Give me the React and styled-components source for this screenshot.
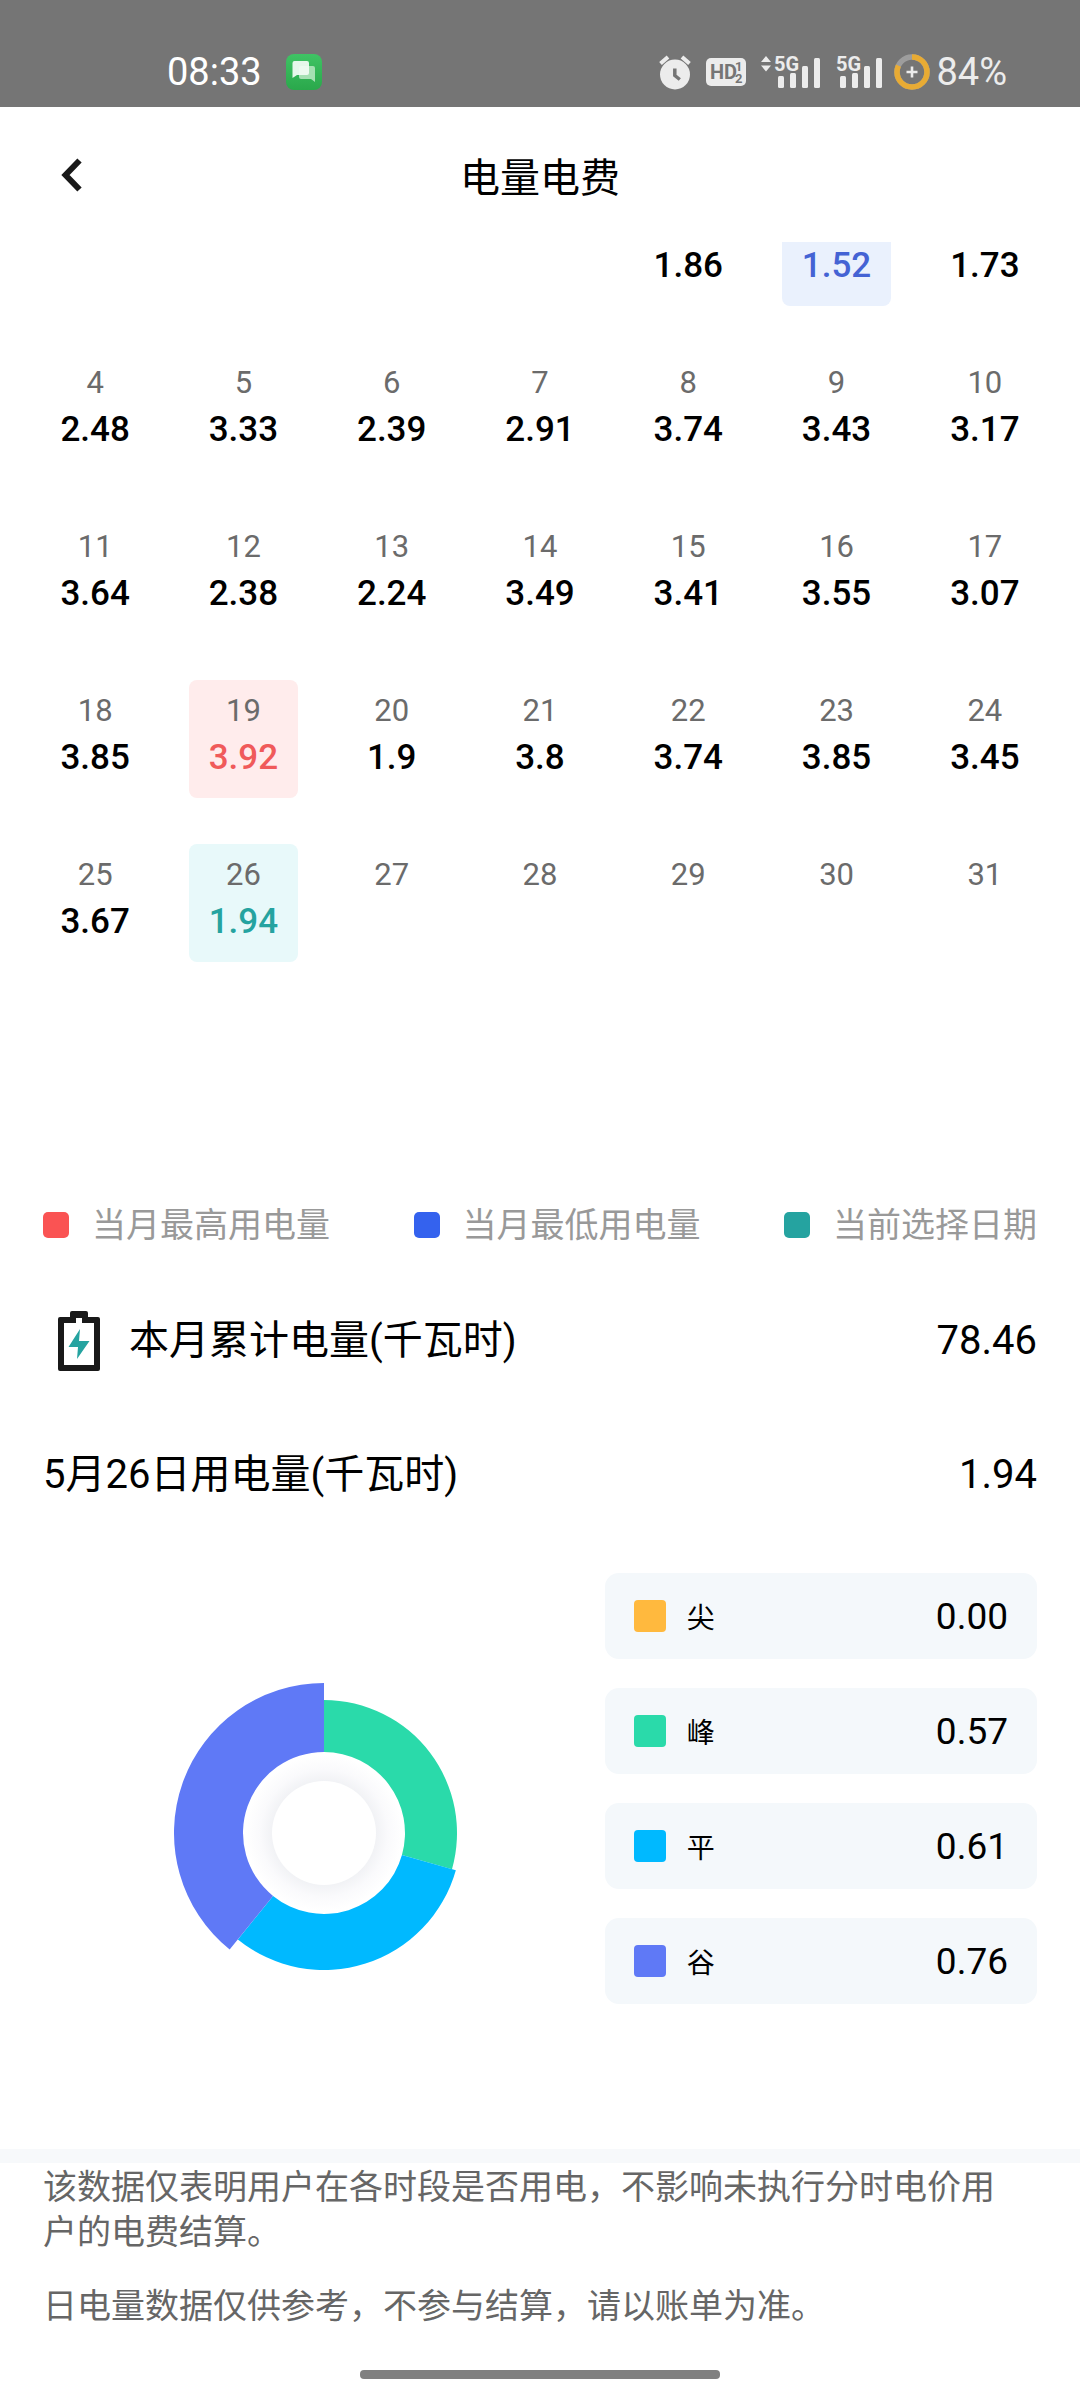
import React from "react";
import styled, { createGlobalStyle } from "styled-components";

const tones = {
  max: { color: "#f05a5a", background: "#ffecec" },
  min: { color: "#4463d4", background: "#eaf1fd" },
  selected: { color: "#25a3a0", background: "#e8f9fa" },
};

const leadingBlanks = 4;

const days = [
  { day: 1, value: "1.86", clipped: true },
  { day: 2, value: "1.52", clipped: true, tone: "min" },
  { day: 3, value: "1.73", clipped: true },
  { day: 4, value: "2.48" },
  { day: 5, value: "3.33" },
  { day: 6, value: "2.39" },
  { day: 7, value: "2.91" },
  { day: 8, value: "3.74" },
  { day: 9, value: "3.43" },
  { day: 10, value: "3.17" },
  { day: 11, value: "3.64" },
  { day: 12, value: "2.38" },
  { day: 13, value: "2.24" },
  { day: 14, value: "3.49" },
  { day: 15, value: "3.41" },
  { day: 16, value: "3.55" },
  { day: 17, value: "3.07" },
  { day: 18, value: "3.85" },
  { day: 19, value: "3.92", tone: "max" },
  { day: 20, value: "1.9" },
  { day: 21, value: "3.8" },
  { day: 22, value: "3.74" },
  { day: 23, value: "3.85" },
  { day: 24, value: "3.45" },
  { day: 25, value: "3.67" },
  { day: 26, value: "1.94", tone: "selected" },
  { day: 27 },
  { day: 28 },
  { day: 29 },
  { day: 30 },
  { day: 31 },
];

const legend = [
  { label: "当月最高用电量", color: "#fa5353" },
  { label: "当月最低用电量", color: "#3462ee" },
  { label: "当前选择日期", color: "#25a3a0" },
];

const periods = [
  { label: "尖", value: "0.00", color: "#ffb93e" },
  { label: "峰", value: "0.57", color: "#2adaaa", radius: 133 },
  { label: "平", value: "0.61", color: "#00b9ff", radius: 137 },
  { label: "谷", value: "0.76", color: "#5f79f6", radius: 150 },
];

const point = (radius, turn) => {
  const angle = turn * 2 * Math.PI;
  return `${150 + radius * Math.sin(angle)} ${150 - radius * Math.cos(angle)}`;
};

const slicePath = (outer, inner, from, to) => {
  const large = to - from > 0.5 ? 1 : 0;
  return `M${point(outer, from)} A${outer} ${outer} 0 ${large} 1 ${point(outer, to)} L${point(inner, to)} A${inner} ${inner} 0 ${large} 0 ${point(inner, from)} Z`;
};

function MessageIcon() {
  return (
    <svg width="36" height="36" viewBox="0 0 36 36" aria-hidden="true">
      <defs>
        <linearGradient id="message" x1="0" y1="0" x2="0" y2="1">
          <stop offset="0" stopColor="#3fc364" />
          <stop offset="1" stopColor="#2aa84b" />
        </linearGradient>
      </defs>
      <rect width="36" height="36" rx="8" fill="url(#message)" />
      <path d="M15 12h12a2 2 0 0 1 2 2v14l-4-3H15a2 2 0 0 1-2-2v-9a2 2 0 0 1 2-2z" fill="#a5e0b3" />
      <path d="M8.500 7H21a2 2 0 0 1 2 2v10a2 2 0 0 1-2 2H11l-4.500 3V9a2 2 0 0 1 2-2z" fill="#f1fbf3" fillOpacity="0.94" />
    </svg>
  );
}

function AlarmIcon() {
  return (
    <svg width="32" height="36" viewBox="0 0 32 36" aria-hidden="true">
      <circle cx="16" cy="20.500" r="15" fill="#ececec" />
      <path d="M1.500 9.500 9 3M23 3l7.500 6.500" stroke="#ececec" strokeWidth="4" />
      <path d="M15.800 14.500v7l5 4" fill="none" stroke="#757575" strokeWidth="3.500" />
    </svg>
  );
}

function HdIcon() {
  return (
    <svg width="40" height="28" viewBox="0 0 40 28" aria-hidden="true">
      <rect width="40" height="28" rx="5" fill="#ececec" />
      <HdText x="4" y="21" $size={20}>HD</HdText>
      <HdText x="29" y="13" $size={13}>1</HdText>
      <HdText x="29" y="25" $size={13}>2</HdText>
    </svg>
  );
}

function SignalIcon({ arrows }) {
  return (
    <svg
      width={arrows ? 60 : 47}
      height="42"
      viewBox={arrows ? "-13 -4 60 42" : "0 -4 47 42"}
      aria-hidden="true"
    >
      <g fill="#ececec">
        {arrows && <path d="M-13 7l5-6 5 6zM-13 10.500l5 6 5-6z" />}
        <rect x="4" y="21" width="6" height="12" rx="1.500" />
        <rect x="16" y="18" width="6" height="15" rx="1.500" />
        <rect x="28" y="11" width="6" height="22" rx="1.500" />
        <rect x="40" y="3" width="6" height="30" rx="1.500" />
      </g>
      <NetText x="0" y="16">5G</NetText>
    </svg>
  );
}

function BatteryRing() {
  return (
    <svg width="36" height="36" viewBox="0 0 36 36" aria-hidden="true">
      <circle cx="18" cy="18" r="15" fill="none" stroke="#9d9d9d" strokeWidth="5.500" />
      <circle
        cx="18"
        cy="18"
        r="15"
        fill="none"
        stroke="#e8ab34"
        strokeWidth="5.500"
        pathLength="100"
        strokeDasharray="82 18"
        transform="rotate(-90 18 18)"
      />
      <path d="M12.500 18h11M18 12.500v11" stroke="#ececec" strokeWidth="2.600" />
    </svg>
  );
}

function BatteryIcon() {
  return (
    <svg width="42" height="60" viewBox="0 0 42 60" aria-hidden="true">
      <path
        fillRule="evenodd"
        fill="#191919"
        d="M14 0h14a2 2 0 0 1 2 2v4h10a2 2 0 0 1 2 2v50a2 2 0 0 1-2 2H2a2 2 0 0 1-2-2V8a2 2 0 0 1 2-2h10V2a2 2 0 0 1 2-2zM6 12v42h30V12H24V7h-6v5z"
      />
      <path fill="#25a3a0" d="M22 18 10.500 36H20l-1 12 12.500-18H21z" />
    </svg>
  );
}

function UsageChart() {
  const total = periods.reduce((sum, period) => sum + Number(period.value), 0);
  let turn = 0;
  const slices = periods
    .filter((period) => Number(period.value) > 0)
    .map((period) => {
      const from = turn;
      turn += Number(period.value) / total;
      return { ...period, d: slicePath(period.radius, 81, from, turn) };
    });

  return (
    <svg width="300" height="300" viewBox="0 0 300 300" role="img" aria-label="分时用电量">
      <defs>
        <radialGradient id="halo">
          <stop offset="0.66" stopColor="#f1f2f5" />
          <stop offset="0.82" stopColor="#fafafc" />
          <stop offset="1" stopColor="#ffffff" />
        </radialGradient>
      </defs>
      <circle cx="150" cy="150" r="78" fill="url(#halo)" />
      <circle cx="150" cy="150" r="52" fill="#ffffff" />
      {slices.map((slice) => (
        <path key={slice.label} d={slice.d} fill={slice.color} />
      ))}
    </svg>
  );
}

function App() {
  return (
    <>
      <GlobalStyle />
      <Page>
        <StatusBar>
          <StatusGroup $gap={24}>
            <Time>08:33</Time>
            <MessageIcon />
          </StatusGroup>
          <StatusGroup $gap={15}>
            <AlarmIcon />
            <HdIcon />
            <SignalIcon arrows />
            <StatusGroup $gap={11}>
              <SignalIcon />
              <StatusGroup $gap={6}>
                <BatteryRing />
                <Percent>84%</Percent>
              </StatusGroup>
            </StatusGroup>
          </StatusGroup>
        </StatusBar>

        <Header>
          <BackButton type="button" aria-label="返回">
            <svg width="22" height="34" viewBox="0 0 22 34" aria-hidden="true">
              <path d="M18.500 2.500 4.500 17l14 14.500" fill="none" stroke="#191919" strokeWidth="6" />
            </svg>
          </BackButton>
          <Title>电量电费</Title>
        </Header>

        <main>
          <Calendar>
            {Array.from({ length: leadingBlanks }, (_, i) => (
              <span key={i} />
            ))}
            {days.map(({ day, value, tone, clipped }) => (
              <Day key={day} type="button" $tone={tone} $clipped={clipped}>
                {!clipped && <DayNumber>{day}</DayNumber>}
                {value && <DayValue $tone={tone}>{value}</DayValue>}
              </Day>
            ))}
          </Calendar>

          <Legend>
            {legend.map((item) => (
              <LegendItem key={item.label}>
                <LegendDot $color={item.color} />
                {item.label}
              </LegendItem>
            ))}
          </Legend>

          <Summary>
            <SummaryLabel $inset>
              <BatteryIcon />
              本月累计电量(千瓦时)
            </SummaryLabel>
            <span>78.46</span>
          </Summary>
          <Summary>
            <SummaryLabel>5月26日用电量(千瓦时)</SummaryLabel>
            <span>1.94</span>
          </Summary>

          <Detail>
            <ChartBox>
              <UsageChart />
            </ChartBox>
            <PeriodList>
              {periods.map((period) => (
                <Period key={period.label}>
                  <PeriodDot $color={period.color} />
                  <PeriodLabel>{period.label}</PeriodLabel>
                  <PeriodValue>{period.value}</PeriodValue>
                </Period>
              ))}
            </PeriodList>
          </Detail>
        </main>

        <Notes>
          <p>该数据仅表明用户在各时段是否用电，不影响未执行分时电价用户的电费结算。</p>
          <p>日电量数据仅供参考，不参与结算，请以账单为准。</p>
        </Notes>
        <HomeIndicator />
      </Page>
    </>
  );
}

const GlobalStyle = createGlobalStyle`
  * {
    box-sizing: border-box;
  }
  body {
    margin: 0;
    background: #ffffff;
    color: #000000;
    font-family: Roboto, "Noto Sans CJK SC", sans-serif;
  }
  svg {
    display: block;
    flex: none;
  }
  p, h1, ul {
    margin: 0;
    padding: 0;
  }
  button {
    border: 0;
    padding: 0;
    background: none;
    font-family: inherit;
  }
`;

const Page = styled.div`
  display: flex;
  flex-direction: column;
  min-height: 100vh;
`;

const StatusBar = styled.div`
  display: flex;
  align-items: center;
  justify-content: space-between;
  height: 107px;
  padding: 36px 73px 0 167px;
  background: #757575;
`;

const StatusGroup = styled.div`
  display: flex;
  align-items: center;
  gap: ${({ $gap }) => $gap}px;
`;

const Time = styled.span`
  color: #ffffff;
  font-size: 38px;
`;

const Percent = styled.span`
  color: #ececec;
  font-size: 38px;
`;

const HdText = styled.text`
  fill: #757575;
  font-family: "Liberation Sans Narrow", Roboto, sans-serif;
  font-size: ${({ $size }) => $size}px;
  font-weight: 700;
`;

const NetText = styled.text`
  fill: #ececec;
  stroke: #757575;
  stroke-width: 3px;
  paint-order: stroke;
  font-family: "Liberation Sans Narrow", Roboto, sans-serif;
  font-size: 20px;
  font-weight: 700;
`;

const Header = styled.header`
  display: grid;
  grid-template-columns: 1fr auto 1fr;
  align-items: center;
  height: 135px;
  padding: 0 61px;
`;

const BackButton = styled.button`
  justify-self: start;
  cursor: pointer;
`;

const Title = styled.h1`
  font-size: 40px;
  font-weight: 400;
`;

const Calendar = styled.section`
  display: grid;
  grid-template-columns: repeat(7, 1fr);
  grid-template-rows: 64px repeat(5, 118px);
  row-gap: 46px;
  justify-items: center;
  padding: 0 21px;
`;

const Day = styled.button`
  display: flex;
  flex-direction: column;
  align-items: center;
  width: 109px;
  padding-top: ${({ $clipped }) => ($clipped ? 0 : 8)}px;
  border-radius: ${({ $clipped }) => ($clipped ? "0 0 8px 8px" : "8px")};
  background: ${({ $tone }) => ($tone ? tones[$tone].background : "transparent")};
  cursor: pointer;
`;

const DayNumber = styled.span`
  color: #6b6b6b;
  font-size: 31px;
  line-height: 46px;
`;

const DayValue = styled.span`
  color: ${({ $tone }) => ($tone ? tones[$tone].color : "#000000")};
  font-size: 35px;
  font-weight: 500;
  line-height: 48px;
`;

const Legend = styled.ul`
  display: flex;
  justify-content: space-between;
  margin-top: 75px;
  padding: 0 43px;
  list-style: none;
`;

const LegendItem = styled.li`
  display: flex;
  align-items: center;
  gap: 23px;
  color: #999999;
  font-size: 34px;
  line-height: 48px;
`;

const LegendDot = styled.span`
  width: 26px;
  height: 26px;
  border-radius: 5px;
  background: ${({ $color }) => $color};
`;

const Summary = styled.div`
  display: flex;
  align-items: center;
  justify-content: space-between;
  margin-top: 62px;
  padding: 0 43px;
  font-size: 40px;
  line-height: 60px;

  & + & {
    margin-top: 74px;
  }
`;

const SummaryLabel = styled.span`
  display: flex;
  align-items: center;
  gap: 29px;
  padding-left: ${({ $inset }) => ($inset ? 15 : 0)}px;
`;

const Detail = styled.section`
  display: grid;
  grid-template-columns: 13fr 10fr;
  margin-top: 68px;
  padding: 0 43px;
`;

const ChartBox = styled.div`
  display: flex;
  align-items: flex-end;
  justify-content: center;
  padding-bottom: 21px;
`;

const PeriodList = styled.ul`
  display: flex;
  flex-direction: column;
  gap: 29px;
  list-style: none;
`;

const Period = styled.li`
  display: flex;
  align-items: center;
  height: 86px;
  padding: 0 29px;
  border-radius: 14px;
  background: #f4f8fb;
`;

const PeriodDot = styled.span`
  width: 32px;
  height: 32px;
  border-radius: 4px;
  background: ${({ $color }) => $color};
`;

const PeriodLabel = styled.span`
  margin-left: 21px;
  font-size: 28px;
`;

const PeriodValue = styled.span`
  margin-left: auto;
  font-size: 37px;
`;

const Notes = styled.footer`
  margin-top: 145px;
  padding: 2px 60px 0 43px;
  border-top: 14px solid #f7f9fb;
  color: #666666;
  font-size: 34px;
  line-height: 45px;

  p + p {
    margin-top: 29px;
  }
`;

const HomeIndicator = styled.div`
  width: 33.33%;
  height: 9px;
  margin: 41px auto 21px;
  border-radius: 4px;
  background: #808080;
`;

export default App;
